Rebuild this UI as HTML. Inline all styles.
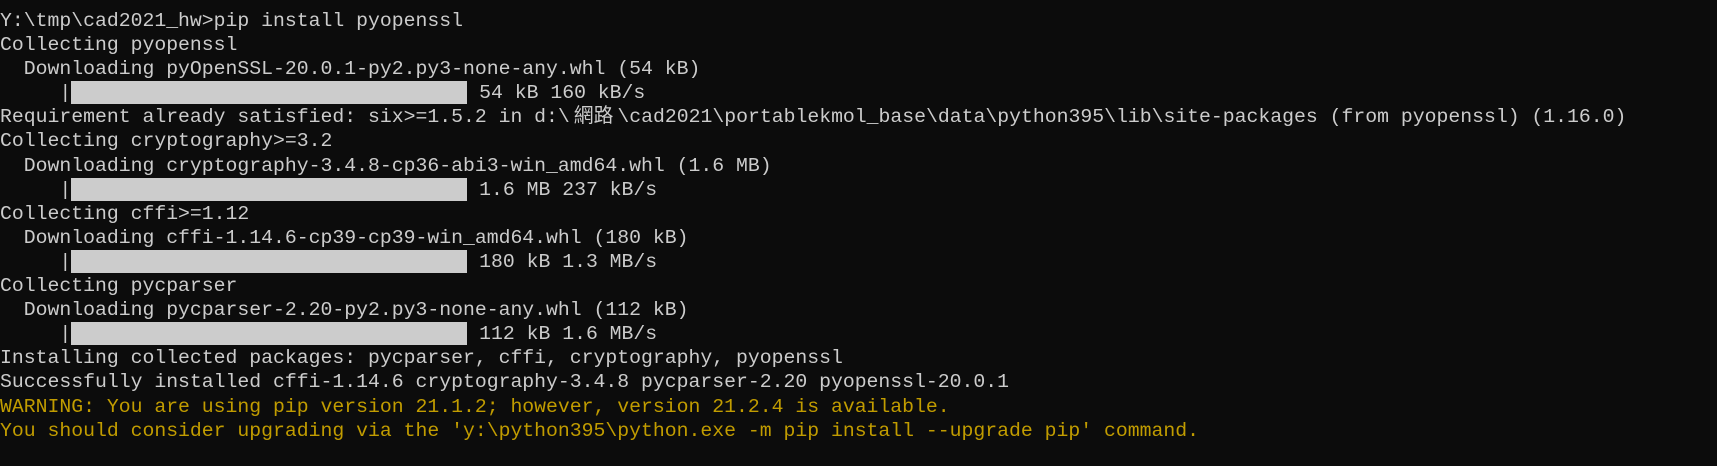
<!DOCTYPE html>
<html><head><meta charset="utf-8"><style>
html,body{margin:0;padding:0;background:#0c0c0c;width:1717px;height:466px;overflow:hidden}
pre{margin:0;padding:9px 0 0 0;font-family:"Liberation Mono","Noto Sans CJK TC",monospace;font-size:19.8px;line-height:24.1px;color:#cccccc;white-space:pre;letter-spacing:0}
.b{background:#cccccc;display:inline-block;width:396px;height:23px;vertical-align:top}
.y{color:#c19c00}
.c{display:inline-block;width:47.6px;text-align:center}
</style></head><body><pre>Y:\tmp\cad2021_hw&gt;pip install pyopenssl
Collecting pyopenssl
  Downloading pyOpenSSL-20.0.1-py2.py3-none-any.whl (54 kB)
     |<span class="b"></span> 54 kB 160 kB/s
Requirement already satisfied: six&gt;=1.5.2 in d:\<span class="c">網路</span>\cad2021\portablekmol_base\data\python395\lib\site-packages (from pyopenssl) (1.16.0)
Collecting cryptography&gt;=3.2
  Downloading cryptography-3.4.8-cp36-abi3-win_amd64.whl (1.6 MB)
     |<span class="b"></span> 1.6 MB 237 kB/s
Collecting cffi&gt;=1.12
  Downloading cffi-1.14.6-cp39-cp39-win_amd64.whl (180 kB)
     |<span class="b"></span> 180 kB 1.3 MB/s
Collecting pycparser
  Downloading pycparser-2.20-py2.py3-none-any.whl (112 kB)
     |<span class="b"></span> 112 kB 1.6 MB/s
Installing collected packages: pycparser, cffi, cryptography, pyopenssl
Successfully installed cffi-1.14.6 cryptography-3.4.8 pycparser-2.20 pyopenssl-20.0.1
<span class="y">WARNING: You are using pip version 21.1.2; however, version 21.2.4 is available.
You should consider upgrading via the 'y:\python395\python.exe -m pip install --upgrade pip' command.</span>
</pre></body></html>
